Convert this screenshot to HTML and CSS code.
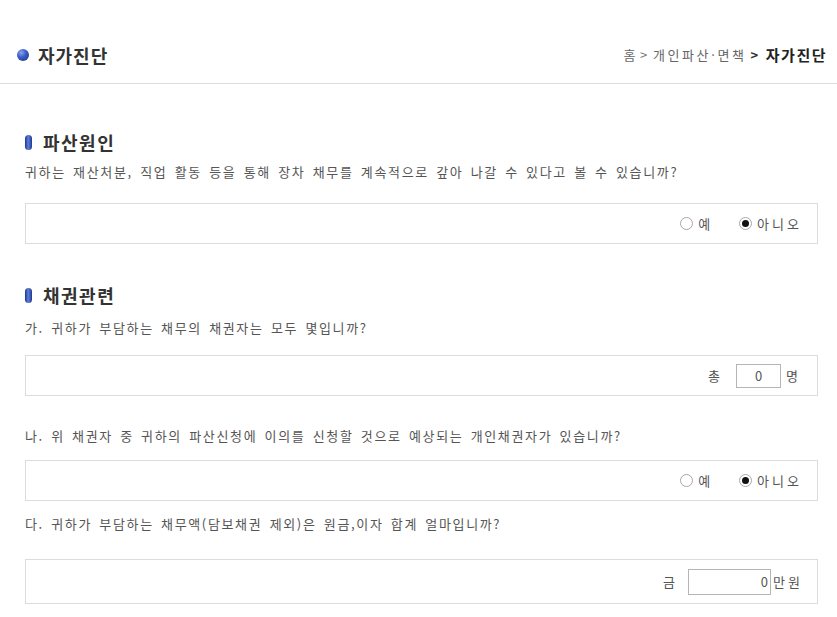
FILE: index.html
```html
<!DOCTYPE html>
<html lang="ko">
<head>
<meta charset="utf-8">
<title>자가진단</title>
<link rel="stylesheet" href="styles.css">
</head>
<body>
<header class="page-head">
  <h1 class="page-title"><span class="title-dot"></span>자가진단</h1>
  <nav class="crumbs">
    <span class="crumb">홈</span>
    <span class="sep">&gt;</span>
    <span class="crumb">개인파산·면책</span>
    <span class="sep sep-strong">&gt;</span>
    <span class="crumb crumb-current">자가진단</span>
  </nav>
</header>

<main class="content">
  <section class="group group-first">
    <h2 class="group-title"><span class="pill"></span>파산원인</h2>
    <p class="question q1">귀하는 재산처분, 직업 활동 등을 통해 장차 채무를 계속적으로 갚아 나갈 수 있다고 볼 수 있습니까?</p>
    <div class="answer">
      <label class="opt"><input type="radio" name="r1" class="radio"><span>예</span></label>
      <label class="opt"><input type="radio" name="r1" class="radio" checked><span>아니오</span></label>
    </div>
  </section>

  <section class="group group-second">
    <h2 class="group-title"><span class="pill"></span>채권관련</h2>
    <p class="question q2">가. 귀하가 부담하는 채무의 채권자는 모두 몇입니까?</p>
    <div class="answer answer-count">
      <span class="unit-pre">총</span>
      <input type="text" class="field field-count" value="0">
      <span class="unit-post">명</span>
    </div>

    <p class="question q3">나. 위 채권자 중 귀하의 파산신청에 이의를 신청할 것으로 예상되는 개인채권자가 있습니까?</p>
    <div class="answer">
      <label class="opt"><input type="radio" name="r2" class="radio"><span>예</span></label>
      <label class="opt"><input type="radio" name="r2" class="radio" checked><span>아니오</span></label>
    </div>

    <p class="question q4">다. 귀하가 부담하는 채무액(담보채권 제외)은 원금,이자 합계 얼마입니까?</p>
    <div class="answer answer-money">
      <span class="unit-pre unit-money">금</span>
      <input type="text" class="field field-money" value="0">
      <span class="unit-won">만원</span>
    </div>
  </section>
</main>
</body>
</html>
```

FILE: styles.css
```css
* { box-sizing: border-box; }

html, body {
  margin: 0;
  padding: 0;
  background: #ffffff;
}

body {
  font-family: "Noto Sans CJK KR", "Noto Sans", sans-serif;
  color: #555;
  width: 837px;
}

.page-head {
  height: 84px;
  padding: 26px 10px 0 17px;
  border-bottom: 1px solid #dcdcdc;
  display: flex;
  align-items: center;
  justify-content: space-between;
}

.page-title {
  margin: 0;
  display: flex;
  align-items: center;
  font-size: 18px;
  font-weight: 700;
  letter-spacing: 1px;
  color: #333;
  line-height: 22px;
}

.title-dot {
  width: 12px;
  height: 12px;
  border-radius: 50%;
  margin-right: 9px;
  background: radial-gradient(circle at 35% 30%, #8aa3ee 0%, #3d5fc8 40%, #1a2f82 100%);
}

.crumbs {
  display: flex;
  align-items: center;
  font-size: 13px;
  line-height: 18px;
  color: #666;
  letter-spacing: 2.6px;
}

.sep {
  margin: 0 3px 0 2px;
  color: #777;
}

.sep-strong {
  font-weight: 700;
  color: #333;
  margin: 0 5px 0 4px;
}

.crumb-current {
  font-weight: 700;
  font-size: 15px;
  letter-spacing: 1.5px;
  color: #222;
}

.content {
  padding: 0 19px 0 25px;
}

.group-first { margin-top: 47px; }
.group-second { margin-top: 40px; }

.group-title {
  margin: 0;
  display: flex;
  align-items: center;
  font-size: 18px;
  font-weight: 700;
  letter-spacing: 1.5px;
  line-height: 22px;
  color: #333;
}

.pill {
  width: 7px;
  height: 15px;
  border-radius: 4px;
  margin-right: 11px;
  background: linear-gradient(90deg, #1c3486 0%, #5d7fdc 45%, #23398d 100%);
}

.question {
  margin: 0;
  font-size: 13px;
  line-height: 18px;
  letter-spacing: 1.65px;
  word-spacing: 2px;
  color: #555;
}

.q1 { margin-top: 10px; margin-bottom: 22px; }
.q2 { margin-top: 13px; margin-bottom: 18px; }
.q3 { margin-top: 31px; margin-bottom: 15px; }
.q4 { margin-top: 14px; margin-bottom: 26px; }

.answer {
  height: 41px;
  border: 1px solid #dcdcdc;
  display: flex;
  align-items: center;
  justify-content: flex-end;
  padding-right: 15px;
  font-size: 13px;
  color: #555;
  letter-spacing: 2px;
}

.answer-money {
  height: 45px;
  padding-right: 14px;
}

.opt {
  display: flex;
  align-items: center;
  margin-left: 26px;
}

.opt span {
  margin-left: 5px;
  letter-spacing: 3px;
}

.radio {
  appearance: none;
  -webkit-appearance: none;
  margin: 0;
  width: 13px;
  height: 13px;
  border: 1px solid #a8a8a8;
  border-radius: 50%;
  background: #fff;
  display: grid;
  place-items: center;
}

.radio:checked::after {
  content: "";
  width: 7px;
  height: 7px;
  border-radius: 50%;
  background: #111;
}

.unit-pre { margin-right: 14px; }
.unit-money { margin-right: 11px; }

.field {
  font-family: inherit;
  font-size: 13px;
  letter-spacing: 0;
  color: #555;
  border: 1px solid #b5b5b5;
  padding: 0 2px;
  margin: 0;
  outline: none;
}

.field-count {
  width: 45px;
  height: 24px;
  text-align: center;
}

.field-money {
  width: 83px;
  height: 26px;
  text-align: right;
}

.unit-post { margin-left: 5px; margin-right: 2px; }
.unit-won { margin-left: 2px; letter-spacing: 3px; }
```
